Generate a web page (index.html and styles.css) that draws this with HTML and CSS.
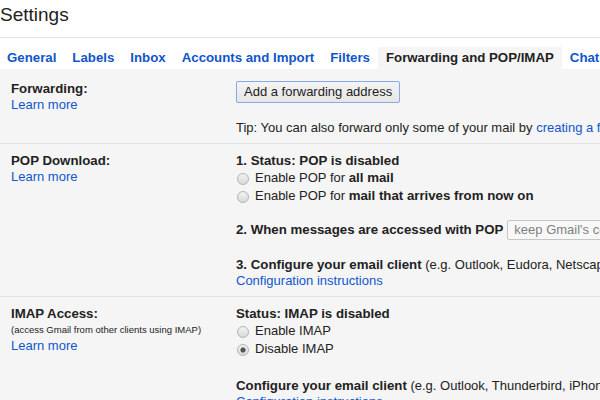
FILE: index.html
```html
<!DOCTYPE html>
<html lang="en">
<head>
<meta charset="utf-8">
<title>Settings</title>
<link rel="stylesheet" href="styles.css">
</head>
<body>
<div class="title">Settings</div>
<nav class="tabs">
  <a class="tab">General</a>
  <a class="tab">Labels</a>
  <a class="tab">Inbox</a>
  <a class="tab">Accounts and Import</a>
  <a class="tab">Filters</a>
  <a class="tab active">Forwarding and POP/IMAP</a>
  <a class="tab">Chat</a>
  <a class="tab">Labs</a>
</nav>
<div class="content">
  <div class="row first">
    <div class="label">
      <div class="name">Forwarding:</div>
      <a class="link">Learn more</a>
    </div>
    <div class="value">
      <button class="btn" type="button">Add a forwarding address</button>
      <div class="tip">Tip: You can also forward only some of your mail by <a class="link">creating a filter!</a></div>
    </div>
  </div>
  <div class="row">
    <div class="label">
      <div class="name">POP Download:</div>
      <a class="link">Learn more</a>
    </div>
    <div class="value">
      <div class="line"><b>1. Status: POP is disabled</b></div>
      <label class="opt"><input type="radio" name="pop" class="radio"><span>Enable POP for <b>all mail</b></span></label>
      <label class="opt"><input type="radio" name="pop" class="radio"><span>Enable POP for <b>mail that arrives from now on</b></span></label>
      <div class="line sel-line"><b>2. When messages are accessed with POP</b><span class="select">keep Gmail's copy in the Inbox</span></div>
      <div class="line gap"><b>3. Configure your email client</b> (e.g. Outlook, Eudora, Netscape Mail)</div>
      <div class="line"><a class="link">Configuration instructions</a></div>
    </div>
  </div>
  <div class="row">
    <div class="label">
      <div class="name">IMAP Access:</div>
      <div class="small">(access Gmail from other clients using IMAP)</div>
      <a class="link">Learn more</a>
    </div>
    <div class="value">
      <div class="line"><b>Status: IMAP is disabled</b></div>
      <label class="opt"><input type="radio" name="imap" class="radio"><span>Enable IMAP</span></label>
      <label class="opt"><input type="radio" name="imap" class="radio" checked><span>Disable IMAP</span></label>
      <div class="line gap2"><b>Configure your email client</b> (e.g. Outlook, Thunderbird, iPhone)</div>
      <div class="line"><a class="link">Configuration instructions</a></div>
    </div>
  </div>
</div>
</body>
</html>
```

FILE: styles.css
```css
html, body {
  margin: 0;
  padding: 0;
  overflow: hidden;
  background: #fff;
}
body {
  font-family: "Liberation Sans", Arial, sans-serif;
  font-size: 13px;
  color: #222;
  width: 600px;
  height: 400px;
}
b {
  font-size: 13.25px;
}
.title {
  font-size: 19px;
  line-height: 24px;
  padding: 3px 0 10px;
  border-bottom: 1px solid #e5e5e5;
  color: #222;
}
.tabs {
  display: flex;
  margin-top: 9px;
  margin-left: -1px;
  white-space: nowrap;
  height: 22px;
}
.tab {
  flex: none;
  display: block;
  padding: 0 8px;
  line-height: 22px;
  font-size: 13.25px;
  font-weight: bold;
  color: #15c;
  cursor: pointer;
}
.tab.active {
  background: #f5f5f5;
  color: #222;
}
.content {
  background: #f5f5f5;
  min-height: 400px;
}
.row {
  display: grid;
  grid-template-columns: 236px 1fr;
  padding: 9px 0 7px;
  border-top: 1px solid #e2e2e2;
  line-height: 16px;
}
.row.first {
  border-top: none;
  padding-top: 12px;
}
.label {
  padding-left: 11px;
}
.name {
  font-weight: bold;
  font-size: 13.25px;
}
.small {
  font-size: 9.5px;
  line-height: 16px;
}
.link {
  color: #15c;
  cursor: pointer;
  display: inline-block;
}
.value {
  white-space: nowrap;
  min-width: 0;
}
.btn {
  display: block;
  height: 22px;
  box-sizing: border-box;
  margin: 0;
  padding: 0 7px;
  border: 1px solid #86a9e8;
  border-radius: 2px;
  background: linear-gradient(#f4f4f4, #e6e6e6);
  font-family: "Liberation Sans", Arial, sans-serif;
  font-size: 13px;
  line-height: 20px;
  color: #222;
}
.tip {
  margin-top: 17px;
}
.line {
  line-height: 16px;
}
.opt {
  display: flex;
  align-items: center;
  height: 18px;
  line-height: 18px;
}
.radio {
  appearance: none;
  -webkit-appearance: none;
  flex: none;
  width: 12px;
  height: 12px;
  margin: 2px 6px 0 1px;
  box-sizing: border-box;
  border: 1px solid #b4b4b4;
  border-radius: 50%;
  background: linear-gradient(#f2f2f2, #d9d9d9);
}
.radio:checked {
  background: radial-gradient(circle, #555 0 2.2px, rgba(85,85,85,0) 3px), linear-gradient(#f2f2f2, #d9d9d9);
}
.sel-line {
  margin-top: 15px;
  line-height: 20px;
}
.select {
  display: inline-block;
  vertical-align: top;
  height: 20px;
  box-sizing: border-box;
  margin-left: 4px;
  padding: 0 6px;
  border: 1px solid #c6c6c6;
  border-radius: 2px;
  background: #f8f8f8;
  color: #808080;
  font-size: 13px;
  line-height: 18px;
}
.gap {
  margin-top: 17px;
}
.gap2 {
  margin-top: 20px;
}
```
